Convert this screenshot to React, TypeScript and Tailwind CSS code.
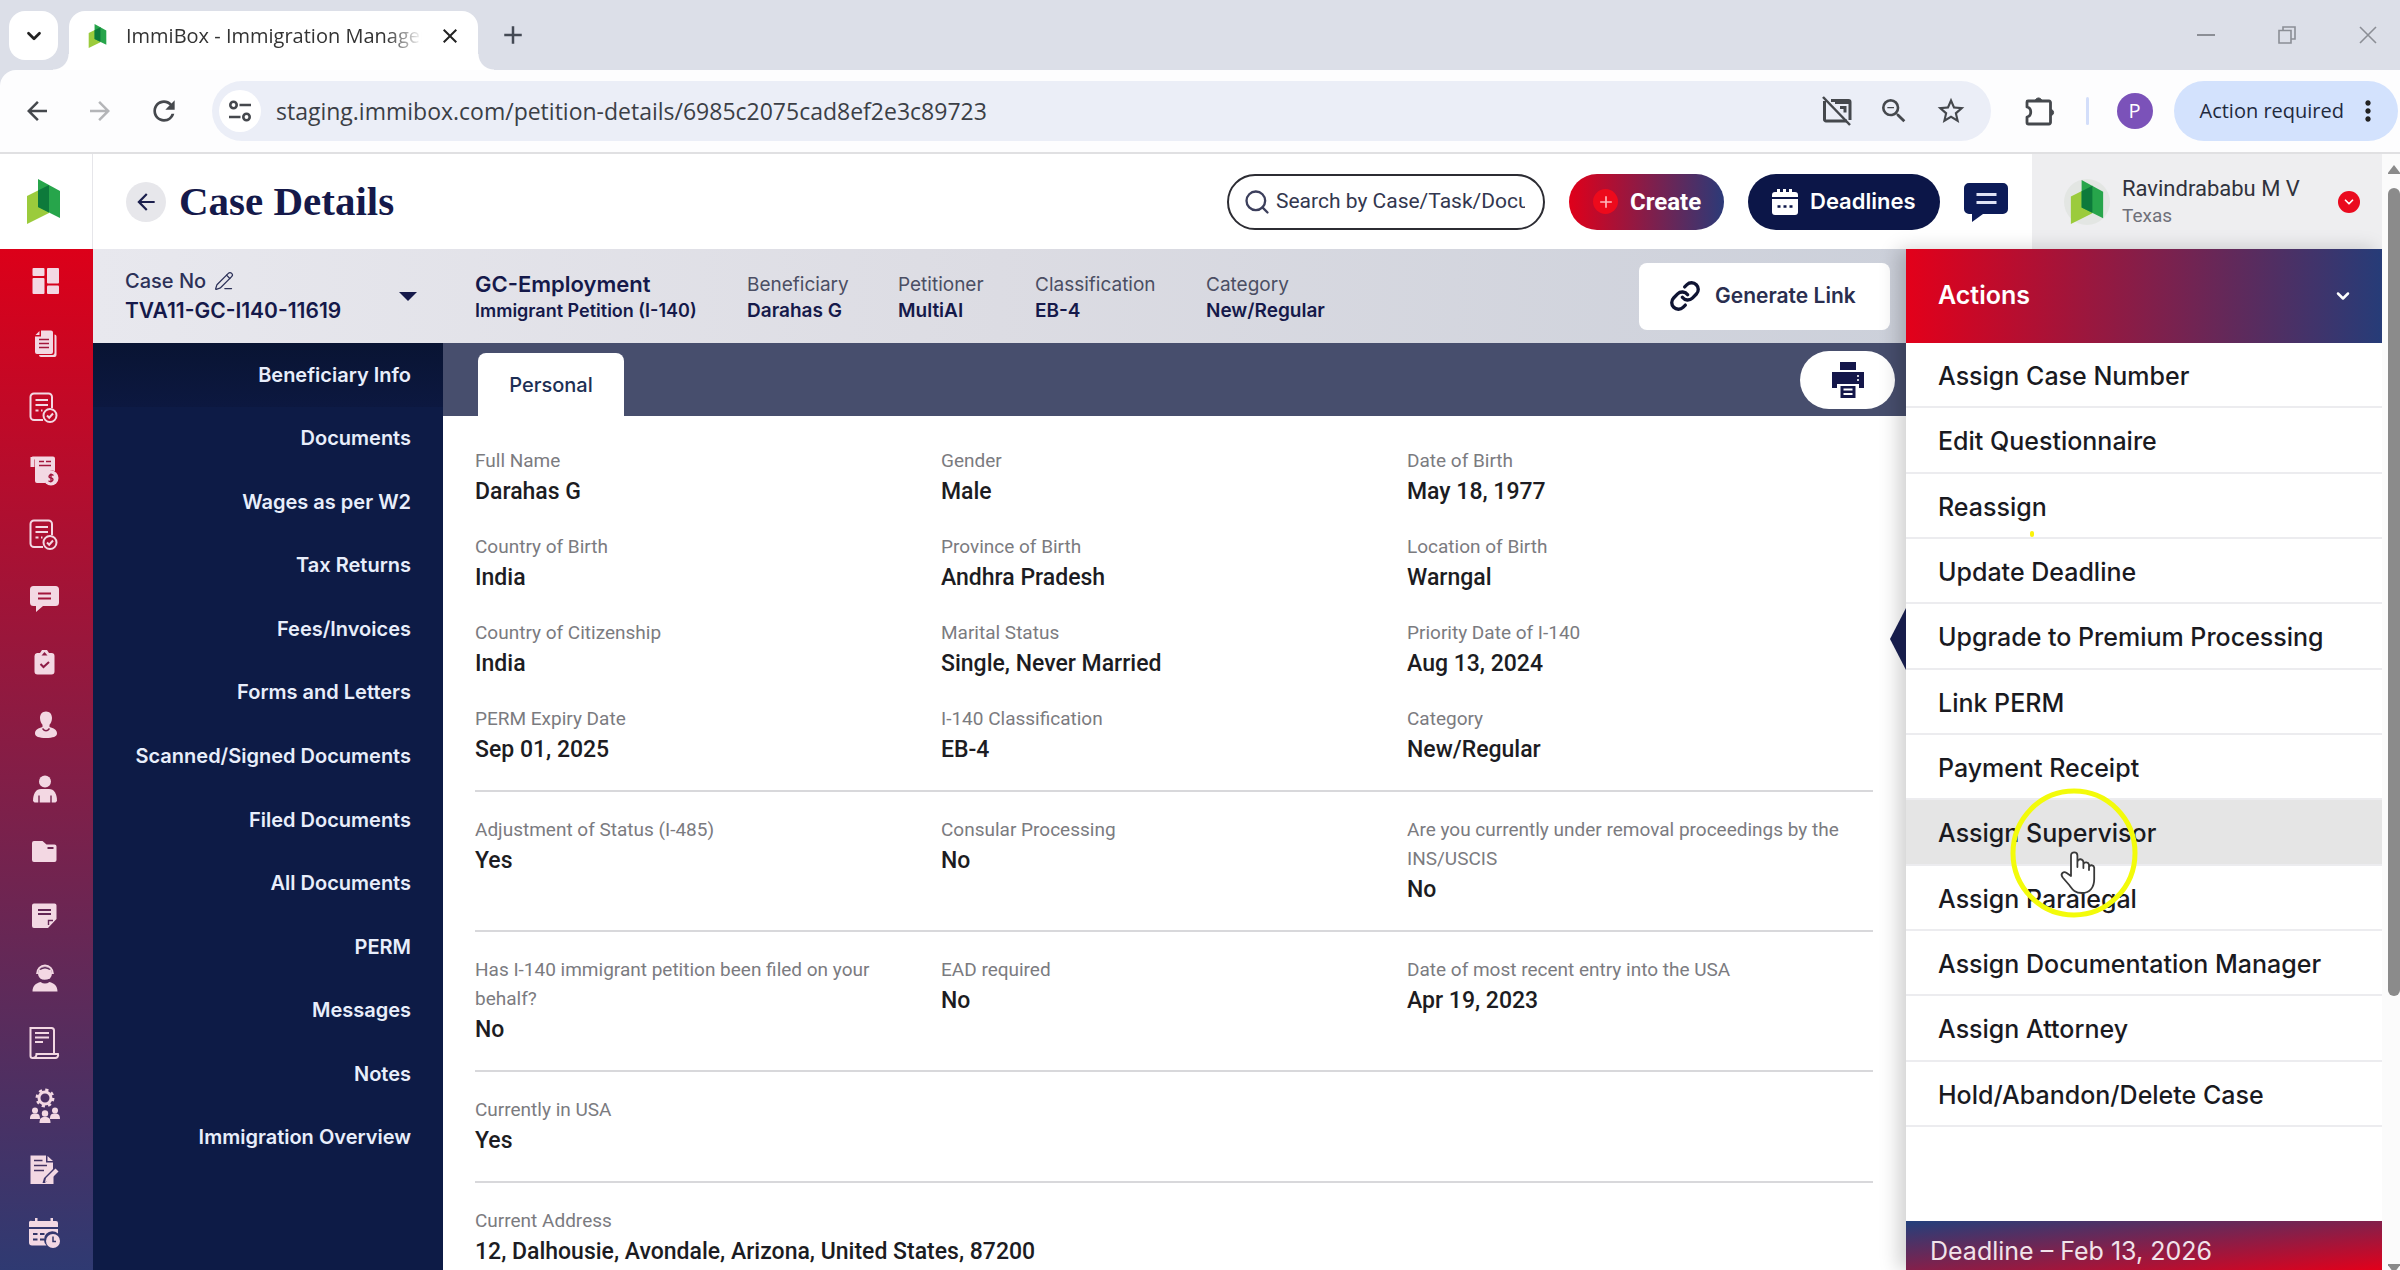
import React from "react";
import {
  MdArrowBack,
  MdArrowForward,
  MdRefresh,
  MdStarBorder,
  MdZoomOut,
  MdMoreVert,
  MdClose,
  MdAdd,
} from "react-icons/md";
import { ChevronDown, Link as LinkIcon, PencilLine, Search } from "lucide-react";

const CUT = "#a3163c";

function Logo({ className }: { className: string }) {
  return (
    <svg viewBox="0 0 33 45" className={className} aria-hidden="true">
      <path d="M0 17 22 6v28L0 45Z" fill="#9bcb3c" />
      <path d="M11 0l22 12v27L11 28Z" fill="#27a54b" />
      <path d="M11 11.5 22 6v27.5L11 28Z" fill="#0d7a3b" />
    </svg>
  );
}

function ChatIcon({ className, line }: { className: string; line: string }) {
  return (
    <svg viewBox="0 0 44 40" className={className} aria-hidden="true">
      <path
        d="M5 1h34a5 5 0 0 1 5 5v21a5 5 0 0 1-5 5H19l-11 8v-8H5a5 5 0 0 1-5-5V6a5 5 0 0 1 5-5Z"
        fill="currentColor"
      />
      <path d="M12.5 12.5h20M12.5 20.5h20" stroke={line} strokeWidth="3" />
    </svg>
  );
}

function DocCheck() {
  return (
    <g fill="none" stroke="currentColor" strokeWidth="2">
      <path d="M14 28H5a3.5 3.5 0 0 1-3.5-3.5V5A3.5 3.5 0 0 1 5 1.5h14.5A3.5 3.5 0 0 1 23 5v11" />
      <path d="M6.5 8H19M6.5 13H19M6.5 18.5h3M12 18.5h1.5" />
      <circle cx="21" cy="23.5" r="6.5" />
      <path d="m18 23.5 2.200 2.200 3.800-4.200" />
    </g>
  );
}

const railIcons: { label: string; art: React.ReactNode }[] = [
  {
    label: "Dashboard",
    art: (
      <>
        <rect x="3.5" y="3" width="12" height="8" rx="1" />
        <rect x="3.5" y="13" width="12" height="16" rx="1" />
        <rect x="18" y="3" width="12" height="15.5" rx="1" />
        <rect x="18" y="20.5" width="12" height="8.5" rx="1" />
      </>
    ),
  },
  {
    label: "Petitions",
    art: (
      <>
        <path d="M12 2.5h10a2 2 0 0 1 2 2V24a2 2 0 0 1-2 2H8a2 2 0 0 1-2-2V8.5h6Z" />
        <path d="M10.5 3 6.5 7h4Z" />
        <path d="M25.5 6.5a2 2 0 0 1 2 2V27a2 2 0 0 1-2 2H12a2 2 0 0 1-2-2h13.5a2 2 0 0 0 2-2Z" />
        <path d="M10 11.5h10M10 15.5h10M10 19.5h10" stroke={CUT} strokeWidth="1.5" />
      </>
    ),
  },
  { label: "Approvals", art: <DocCheck /> },
  {
    label: "Invoices",
    art: (
      <>
        <path d="M1.5 2h4v10h-4Z" />
        <path d="M3 1.5h21a2 2 0 0 1 2 2V16a8 8 0 0 0-9 12H8a2 2 0 0 1-2-2V5Z" />
        <path d="M10 6.5h5M17 6.5h5M10 10.5h12" stroke={CUT} strokeWidth="1.5" />
        <circle cx="22" cy="23" r="7.5" />
        <path
          d="M24.5 20.5q-2.5-1.8-4 0t1.5 2.5 1.5 2.7-4 0M22 18.5v9"
          fill="none"
          stroke={CUT}
          strokeWidth="1.4"
        />
      </>
    ),
  },
  { label: "Reviews", art: <DocCheck /> },
  {
    label: "Messages",
    art: (
      <>
        <path d="M4 4h22.5A3.5 3.5 0 0 1 30 7.5v13a3.5 3.5 0 0 1-3.5 3.5H14l-7 6v-6H4.5A3.5 3.5 0 0 1 1 20.5v-13A3.5 3.5 0 0 1 4.5 4Z" />
        <path d="M9 11.5h13M9 16.5h13" stroke={CUT} strokeWidth="1.8" />
      </>
    ),
  },
  {
    label: "Tasks",
    art: (
      <>
        <path d="M8 7h3l2-3h5l2 3h2.5A3 3 0 0 1 25.5 10v15.5a3 3 0 0 1-3 3h-14a3 3 0 0 1-3-3V10A3 3 0 0 1 8 7Z" />
        <path d="M12.5 9.5h6L15.5 6Z" fill="#8d1c46" />
        <path d="m11.5 18 3 3 5.5-5" fill="none" stroke="#8d1c46" strokeWidth="2" />
      </>
    ),
  },
  {
    label: "Clients",
    art: (
      <>
        <path d="M17 2.5c3.800 0 6 2.800 6 6.500 0 3.500-1.500 5.500-2.500 6.800V18c4 1.200 7.500 2.500 7.500 6.500 0 3-4 4.500-11 4.500S6 27.500 6 24.500c0-4 3.500-5.300 7.500-6.500v-2.200C12.500 14.500 11 12.500 11 9c0-3.700 2.200-6.500 6-6.500Z" />
        <path d="M13.5 19.5q3.5 4.5 7 0" fill="none" stroke="#80204a" strokeWidth="1.4" />
      </>
    ),
  },
  {
    label: "Beneficiaries",
    art: (
      <>
        <circle cx="16" cy="8.5" r="6" />
        <path d="M12 16h8c5 0 8 4.5 8 12l-1.5 1.5h-21L4 28c0-7.5 3-12 8-12Z" />
        <path d="M10 22.5V30M22 22.5V30" stroke="#76224e" strokeWidth="1.4" />
      </>
    ),
  },
  {
    label: "Folders",
    art: (
      <>
        <path d="M5 5h8.5l4 3.5H25.5a2 2 0 0 1 2 2V24a2 2 0 0 1-2 2H5a2 2 0 0 1-2-2V7a2 2 0 0 1 2-2Z" />
        <path d="M18.5 12h6" stroke="#6b2551" strokeWidth="2" />
      </>
    ),
  },
  {
    label: "Notes",
    art: (
      <>
        <path d="M5 3.5h20.5a2 2 0 0 1 2 2V19L19 28H5a2 2 0 0 1-2-2V5.5a2 2 0 0 1 2-2Z" />
        <path d="M9 10h13M9 14h13" stroke="#632655" strokeWidth="1.8" />
        <path d="M19.5 25v-4.5H24" fill="none" stroke="#632655" strokeWidth="1.4" />
      </>
    ),
  },
  {
    label: "Support",
    art: (
      <>
        <circle cx="16" cy="10.5" r="7" />
        <path d="M8 11a8 8.5 0 0 1 16 0" fill="none" stroke="currentColor" strokeWidth="1.8" />
        <path d="M3.5 28.5c0-5.5 3.5-8.5 8-9.5q4.5 3 9 0c4.5 1 8 4 8 9.5Z" />
        <path d="M11 6.5q5-3.5 10 0M10 15.5q4 3.5 11 1" fill="none" stroke="#5a2958" strokeWidth="1.4" />
      </>
    ),
  },
  {
    label: "Audit log",
    art: (
      <g fill="none" stroke="currentColor" strokeWidth="2">
        <path d="M25 26V3.5A2.5 2.5 0 0 0 22.5 1h-21v28a2 2 0 0 0 2 2H26a3 3 0 0 0 3-4H7.5c0 3-1.5 4-4 4" />
        <path d="M6 6h14M6 10.5h14M6 15h8" />
      </g>
    ),
  },
  {
    label: "Teams",
    art: (
      <>
        <circle cx="16" cy="8" r="6" fill="none" stroke="currentColor" strokeWidth="3" />
        <circle cx="16" cy="8" r="8.2" fill="none" stroke="currentColor" strokeWidth="2.5" strokeDasharray="3.200 3.240" />
        <circle cx="6" cy="20.5" r="3" />
        <circle cx="26" cy="20.5" r="3" />
        <path d="M1 29c0-4 1.5-5.5 5-5.5s5 1 5 5.5ZM21 29c0-4.5 1.5-5.5 5-5.5s5 1.5 5 5.5Z" />
        <circle cx="16" cy="23.5" r="3.2" />
        <path d="M10.5 33c0-4.5 1.5-6 5.500-6s5.500 1.500 5.500 6Z" />
      </>
    ),
  },
  {
    label: "Forms",
    art: (
      <>
        <path d="M1.5 1.5H17v7h7V15l-9 9-1.5 5H24v1H1.5Z" />
        <path d="M18.5 2v5H24Z" />
        <path d="m26.5 14.5 3 3-9.5 9.5-4 1 1-4Z" />
        <path d="M24.5 22v8h-10Z" />
        <path d="M5 6.5h8.5M5 11.5h13M5 16.5h10" stroke="#433161" strokeWidth="1.5" />
      </>
    ),
  },
  {
    label: "Calendar",
    art: (
      <>
        <path d="M3 4h3V1h2.5v3h13V1H24v3h3a2 2 0 0 1 2 2v4H0V6a2 2 0 0 1 3-2Z" />
        <path d="M0 12h29v4.5a8 8 0 0 0-11.5 12H3a3 3 0 0 1-3-3Z" />
        <path d="M4 17h4.5M11 17h4.5M4 22.5h4.5M11 22.5h4" stroke="#343769" strokeWidth="2.2" />
        <circle cx="24" cy="24" r="7" />
        <path d="M24 19.5v5h3" fill="none" stroke="#343769" strokeWidth="1.5" />
      </>
    ),
  },
];

const navItems = [
  "Beneficiary Info",
  "Documents",
  "Wages as per W2",
  "Tax Returns",
  "Fees/Invoices",
  "Forms and Letters",
  "Scanned/Signed Documents",
  "Filed Documents",
  "All Documents",
  "PERM",
  "Messages",
  "Notes",
  "Immigration Overview",
];

const actionItems = [
  "Assign Case Number",
  "Edit Questionnaire",
  "Reassign",
  "Update Deadline",
  "Upgrade to Premium Processing",
  "Link PERM",
  "Payment Receipt",
  "Assign Supervisor",
  "Assign Paralegal",
  "Assign Documentation Manager",
  "Assign Attorney",
  "Hold/Abandon/Delete Case",
];

const sections: [string, string][][] = [
  [
    ["Full Name", "Darahas G"],
    ["Gender", "Male"],
    ["Date of Birth", "May 18, 1977"],
    ["Country of Birth", "India"],
    ["Province of Birth", "Andhra Pradesh"],
    ["Location of Birth", "Warngal"],
    ["Country of Citizenship", "India"],
    ["Marital Status", "Single, Never Married"],
    ["Priority Date of I-140", "Aug 13, 2024"],
    ["PERM Expiry Date", "Sep 01, 2025"],
    ["I-140 Classification", "EB-4"],
    ["Category", "New/Regular"],
  ],
  [
    ["Adjustment of Status (I-485)", "Yes"],
    ["Consular Processing", "No"],
    ["Are you currently under removal proceedings by the INS/USCIS", "No"],
  ],
  [
    ["Has I-140 immigrant petition been filed on your behalf?", "No"],
    ["EAD required", "No"],
    ["Date of most recent entry into the USA", "Apr 19, 2023"],
  ],
  [["Currently in USA", "Yes"]],
];

const summary: [string, string, string][] = [
  ["Beneficiary", "Darahas G", "w-[151px]"],
  ["Petitioner", "MultiAI", "w-[137px]"],
  ["Classification", "EB-4", "w-[171px]"],
  ["Category", "New/Regular", "w-[171px]"],
];

function Field({ label, value }: { label: string; value: string }) {
  return (
    <div className="pr-4">
      <dt className="text-[19px] leading-[29px] text-[#7b7b7f]">{label}</dt>
      <dd className="text-[23px] leading-[33px] font-medium text-[#1c1c22]">{value}</dd>
    </div>
  );
}

function BrowserChrome() {
  return (
    <div className="shrink-0 bg-[#dcdfe8] font-['Open_Sans',sans-serif]">
      <div className="flex h-[70px] items-end pl-[9px]">
        <button aria-label="Search tabs" className="mb-[10px] flex size-[49px] items-center justify-center rounded-2xl bg-white text-[#222]">
          <ChevronDown size={22} strokeWidth={3} />
        </button>
        <div className="relative ml-[11px] flex h-[59px] w-[409px] items-center rounded-t-2xl bg-white pr-4 pb-[9px] pl-[17px]">
          <span className="absolute bottom-0 -left-4 size-4 bg-[radial-gradient(circle_at_0_0,transparent_15px,#fff_16px)]" />
          <span className="absolute -right-4 bottom-0 size-4 bg-[radial-gradient(circle_at_100%_0,transparent_15px,#fff_16px)]" />
          <Logo className="h-6 w-[23px]" />
          <span className="ml-[17px] w-[296px] overflow-hidden text-xl whitespace-nowrap text-[#333] [mask-image:linear-gradient(to_right,#000_88%,transparent)]">
            ImmiBox - Immigration Management
          </span>
          <button aria-label="Close tab" className="ml-[16px] text-[#222]">
            <MdClose size={24} />
          </button>
        </div>
        <button aria-label="New tab" className="mb-5 ml-5 text-[#444a54]">
          <MdAdd size={30} />
        </button>
        <div className="mb-[25px] ml-auto flex items-center gap-[61px] pr-[22px] text-[#8b8e95]">
          <button aria-label="Minimize">
            <svg width="20" height="20" viewBox="0 0 20 20"><path d="M1 10h18" stroke="currentColor" strokeWidth="2" /></svg>
          </button>
          <button aria-label="Restore">
            <svg width="20" height="20" viewBox="0 0 20 20" fill="none" stroke="currentColor" strokeWidth="1.6">
              <path d="M2 5.5h12V18H2ZM6 5V2h12v12h-3.5" />
            </svg>
          </button>
          <button aria-label="Close window">
            <svg width="20" height="20" viewBox="0 0 20 20"><path d="m2 2 16 16M18 2 2 18" stroke="currentColor" strokeWidth="1.6" /></svg>
          </button>
        </div>
      </div>

      <div className="flex h-[84px] items-center rounded-tl-2xl border-b-2 border-[#e0e0e2] bg-[#fdfdfe] pl-[22px] text-[#45484d]">
        <button aria-label="Back"><MdArrowBack size={30} /></button>
        <button aria-label="Forward" className="ml-[33px] text-[#b4b5b8]"><MdArrowForward size={30} /></button>
        <button aria-label="Reload" className="ml-[33px]"><MdRefresh size={32} /></button>
        <div className="ml-[32px] flex h-[60px] flex-1 items-center rounded-full bg-[#ebeef7] pr-[24px] pl-[7px]">
          <button aria-label="Site information" className="flex size-[42px] shrink-0 items-center justify-center rounded-full bg-white">
            <svg width="24" height="24" viewBox="0 0 24 24" fill="none" stroke="currentColor" strokeWidth="2.6">
              <circle cx="5.5" cy="6" r="3.2" />
              <circle cx="18.5" cy="18" r="3.2" />
              <path d="M11.5 6H23M1 18h11.5" />
            </svg>
          </button>
          <input
            aria-label="Address"
            readOnly
            defaultValue="staging.immibox.com/petition-details/6985c2075cad8ef2e3c89723"
            className="ml-[15px] flex-1 bg-transparent text-[23px] text-[#3b3f46] outline-none"
          />
          <div className="flex items-center gap-[25px]">
            <button aria-label="Pop-ups blocked">
              <svg width="32" height="30" viewBox="0 0 32 30" fill="none" stroke="currentColor" strokeWidth="3">
                <path d="M10 4.5h17.5A1.5 1.5 0 0 1 29 6v18M3.5 5v18.5A1.5 1.5 0 0 0 5 25h21" />
                <path d="M14 6.5h14M19 11.5h5v5" />
                <path d="m2 1 27 28" strokeWidth="2.5" />
              </svg>
            </button>
            <button aria-label="Zoom"><MdZoomOut size={32} /></button>
            <button aria-label="Bookmark this tab"><MdStarBorder size={32} /></button>
          </div>
        </div>
        <button aria-label="Extensions" className="ml-[33px]">
          <svg width="32" height="32" viewBox="0 0 32 32" fill="none" stroke="currentColor" strokeWidth="2.8" strokeLinejoin="round">
            <path d="M4 6h21a1.5 1.5 0 0 1 1.5 1.5v20A1.5 1.5 0 0 1 25 29H4.5A1.5 1.5 0 0 1 3 27.5V22c5-1 5-9 0-10V7a1 1 0 0 1 1-1Z" />
            <path d="M11.5 5a3.200 3.200 0 0 1 6 0ZM27.5 14.5a3.200 3.200 0 0 1 0 6Z" fill="currentColor" strokeWidth="1" />
          </svg>
        </button>
        <span className="ml-[30px] h-7 w-[3px] rounded bg-[#d3defa]" />
        <span className="ml-[28px] flex size-9 items-center justify-center rounded-full bg-[#7b52b9] text-xl text-white">P</span>
        <button className="mr-[2px] ml-[21px] flex h-[60px] items-center rounded-full bg-[#d3e2fd] pr-[14px] pl-[26px] text-xl text-[#1f2a3d]">
          Action required
          <MdMoreVert size={32} className="ml-2 text-[#222]" />
        </button>
      </div>
    </div>
  );
}

function AppHeader() {
  return (
    <header className="flex h-[95px] shrink-0 items-center bg-white">
      <a href="#home" aria-label="ImmiBox home" className="flex h-full w-[93px] items-center justify-center border-r border-[#e6e6ea] pr-[6px]">
        <Logo className="h-[45px] w-[33px]" />
      </a>
      <button aria-label="Go back" className="ml-[33px] flex size-10 items-center justify-center rounded-full bg-[#e7e7eb] text-[#1b1f4d]">
        <MdArrowBack size={26} />
      </button>
      <h1 className="ml-[13px] font-['Liberation_Serif',serif] text-[41px] leading-none font-bold text-[#15194a]">Case Details</h1>
      <div className="ml-auto flex h-full items-center gap-6">
        <label className="flex h-14 w-[318px] items-center rounded-full border-2 border-[#2c2c33] pr-[18px] pl-[14px]">
          <Search size={28} strokeWidth={2} className="shrink-0 text-[#3c3f5c]" />
          <input
            aria-label="Search"
            placeholder="Search by Case/Task/Document"
            className="ml-[5px] w-full min-w-0 bg-transparent font-['Roboto',sans-serif] text-[21px] outline-none placeholder:text-[#33374f]"
          />
        </label>
        <button className="flex h-14 w-[155px] items-center rounded-full bg-linear-to-r/srgb from-[#e0001a] to-[#2b3a78] pl-6 font-['Roboto',sans-serif] text-[24px] font-bold text-white">
          <span className="mr-3 flex size-[25px] items-center justify-center rounded-full bg-[#ed0a1c] text-[#ffb8bc]">
            <MdAdd size={20} />
          </span>
          Create
        </button>
        <button className="flex h-14 w-48 items-center rounded-full bg-[#0c1648] pl-6 text-[22px] font-semibold text-white">
          <svg width="26" height="26" viewBox="0 0 26 26" fill="currentColor" className="mr-[12px]">
            <path d="M3 3h2V0h3v3h3V0h3v3h3V0h3v3h3a3 3 0 0 1 3 3v2H0V6a3 3 0 0 1 3-3Z" />
            <path d="M0 10h26v13a3 3 0 0 1-3 3H3a3 3 0 0 1-3-3Z" />
            <path d="M5.5 17.5h3M11.5 17.5h3M17.5 17.5h3" stroke="#0c1648" strokeWidth="2.5" />
          </svg>
          Deadlines
        </button>
        <button aria-label="Messages" className="text-[#0c1b58]">
          <ChatIcon className="h-10 w-11" line="#dfe3f5" />
        </button>
        <button className="flex h-full w-[350px] items-center bg-[#eeeef0] pr-[22px] pl-8 text-left font-['Roboto',sans-serif]">
          <span className="flex size-[46px] items-center justify-center rounded-full bg-[#e3e6e3]">
            <Logo className="h-11 w-9" />
          </span>
          <span className="ml-3">
            <span className="block text-[22px] leading-7 text-[#30323c]">Ravindrababu M V</span>
            <span className="block text-[19px] leading-[25px] text-[#6f7079]">Texas</span>
          </span>
          <span className="ml-auto flex size-[22px] items-center justify-center rounded-full bg-[#ea0a1e] text-white">
            <ChevronDown size={14} strokeWidth={3} />
          </span>
        </button>
      </div>
    </header>
  );
}

function CaseBar() {
  return (
    <div className="flex h-[94px] shrink-0 items-center bg-linear-to-r/srgb from-[#e8e8ee] via-[#dcdce3] to-[#ccd0da] text-[#15194a]">
      <div className="flex w-[350px] items-center pr-[26px] pl-8">
        <div>
          <div className="flex items-center gap-2 text-xl leading-[30px] font-medium text-[#2c3158]">
            Case No
            <button aria-label="Edit case number"><PencilLine size={20} strokeWidth={1.5} /></button>
          </div>
          <div className="text-[21px] leading-[30px] font-semibold">TVA11-GC-I140-11619</div>
        </div>
        <button aria-label="Switch case" className="ml-auto">
          <svg width="18" height="9" viewBox="0 0 18 9"><path d="M0 0h18L9 9Z" fill="currentColor" /></svg>
        </button>
      </div>
      <div className="flex flex-1 items-center pt-[2px] pl-8">
        <div className="w-[272px]">
          <div className="text-[22px] leading-[28px] font-semibold">GC-Employment</div>
          <div className="text-[18px] leading-[26px] font-semibold">Immigrant Petition (I-140)</div>
        </div>
        {summary.map(([label, value, width]) => (
          <div key={label} className={width}>
            <div className="text-[19px] leading-[27px] text-[#4b4e63]">{label}</div>
            <div className="text-[19px] leading-[25px] font-semibold">{value}</div>
          </div>
        ))}
      </div>
      <button className="mr-4 flex h-[67px] w-[251px] items-center rounded-lg bg-white pl-[30px] text-[21px] font-semibold text-[#2a2e4f]">
        <LinkIcon size={32} strokeWidth={2.5} className="mr-[14px] text-[#0f1433]" />
        Generate Link
      </button>
    </div>
  );
}

function Actions() {
  return (
    <aside className="relative flex w-[476px] shrink-0 flex-col bg-white shadow-[-8px_0_18px_rgba(0,0,0,0.18)]">
      <svg width="16" height="62" viewBox="0 0 16 62" className="absolute top-[359px] -left-4" aria-hidden="true">
        <path d="M16 0v62L0 31Z" fill="#171d4b" />
      </svg>
      <button className="flex h-[94px] shrink-0 items-center justify-between bg-linear-to-r/srgb from-[#e3001a] to-[#263c78] pr-[29px] pl-8 text-[25px] font-semibold text-white">
        Actions
        <ChevronDown size={20} strokeWidth={3} />
      </button>
      <ul className="grid h-[784px] shrink-0 grid-rows-12">
        {actionItems.map((item) => (
          <li key={item} className="relative flex border-b-2 border-[#ececef]">
            <button
              className={
                item === "Assign Supervisor"
                  ? "w-full bg-[#e5e5e5] px-8 pt-1 text-left text-[25px] font-medium text-[#1a1a1f]"
                  : "w-full px-8 pt-1 text-left text-[25px] font-medium text-[#1a1a1f]"
              }
            >
              {item}
            </button>
            {item === "Reassign" && <span className="absolute bottom-0 left-[124px] h-[6px] w-1 rounded-full bg-[#fbf30a]" />}
            {item === "Assign Supervisor" && <Pointer />}
          </li>
        ))}
      </ul>
      <div className="mt-[94px] flex-1 bg-linear-to-br/srgb from-[#22407c] to-[#e3001a] px-6 pt-[12px] text-[25px] leading-9 text-[#f1e3ea]">
        Deadline – Feb 13, 2026
      </div>
    </aside>
  );
}

function Pointer() {
  return (
    <svg width="130" height="130" viewBox="0 0 130 130" fill="none" className="pointer-events-none absolute -top-[12px] left-[103px] z-10" aria-hidden="true">
      <ellipse cx="65" cy="65" rx="61" ry="62" stroke="#f3fb0a" strokeWidth="5" />
      <path
        d="M62 88V67.5a3.200 3.200 0 0 1 6.400 0V79v-5a3 3 0 0 1 6 .5V80v-4a3 3 0 0 1 5.600.5V82v-3a2.700 2.700 0 0 1 5.200.5V91c0 8-4 14-12 14s-10-4-13-8l-6.500-7.500c-3-4 1-6.500 4-4.500Z"
        fill="#fff"
        stroke="#3a3a3a"
        strokeWidth="1.8"
        strokeLinejoin="round"
      />
    </svg>
  );
}

export default function App() {
  return (
    <div className="flex h-screen flex-col overflow-hidden bg-white font-['Inter',sans-serif]">
      <BrowserChrome />
      <div className="flex min-h-0 flex-1">
        <div className="flex min-w-0 flex-1 flex-col overflow-hidden">
          <AppHeader />
          <div className="flex min-h-0 flex-1">
            <nav aria-label="Main" className="w-[93px] shrink-0 bg-linear-to-b/srgb from-[#dc0019] to-[#2f3a72] text-[#f3d8e3]">
              <ul className="grid h-[1016px] grid-rows-16">
                {railIcons.map(({ label, art }) => (
                  <li key={label} className="flex">
                    <a href="#section" aria-label={label} className="flex flex-1 items-center justify-center pr-[3px]">
                      <svg width="32" height="32" viewBox="0 0 32 32" fill="currentColor" className="overflow-visible">
                        {art}
                      </svg>
                    </a>
                  </li>
                ))}
              </ul>
            </nav>
            <div className="flex min-w-0 flex-1 flex-col">
              <CaseBar />
              <div className="flex min-h-0 flex-1">
                <nav aria-label="Case sections" className="w-[350px] shrink-0 bg-[#0d1b46]">
                  <ul className="grid h-[826px] grid-rows-13 text-right text-xl font-semibold text-[#e8eefb]">
                    {navItems.map((item, i) => (
                      <li key={item} className="flex">
                        <a
                          href="#case"
                          aria-current={i === 0 ? "page" : undefined}
                          className={
                            i === 0
                              ? "flex flex-1 items-center justify-end bg-linear-to-b/srgb from-[#091433] to-[#0c1840] pr-8"
                              : "flex flex-1 items-center justify-end pr-8"
                          }
                        >
                          {item}
                        </a>
                      </li>
                    ))}
                  </ul>
                </nav>
                <main className="flex min-w-0 flex-1 flex-col">
                  <div className="flex h-[73px] shrink-0 items-end justify-between bg-[#474e6d] pr-[11px] pl-[35px]">
                    <button className="h-[63px] w-[146px] rounded-t-lg bg-white text-xl font-medium text-[#1d2f55]">Personal</button>
                    <button aria-label="Print" className="mb-[7px] flex h-[58px] w-[95px] items-center justify-center rounded-full bg-white text-[#14174a]">
                      <svg width="32" height="36" viewBox="0 0 32 36" fill="currentColor">
                        <path d="M8 0h16v8H8Z" />
                        <path d="M0 10h32v16h-5v-4H5v4H0Z" />
                        <path d="M8.5 24h15v12h-15Z" />
                        <path d="M11.5 27.5h9M11.5 32h9" stroke="#fff" strokeWidth="1.8" />
                        <path d="M26 13v2M26 17v2" stroke="#fff" strokeWidth="1.6" />
                      </svg>
                    </button>
                  </div>
                  <div className="pt-[7px] pr-[33px] pl-8 font-['Roboto',sans-serif]">
                    {sections.map((fields) => (
                      <dl key={fields[0][0]} className="grid grid-cols-3 gap-y-6 border-b-2 border-[#d8d8db] pt-[23px] pb-6">
                        {fields.map(([label, value]) => (
                          <Field key={label} label={label} value={value} />
                        ))}
                      </dl>
                    ))}
                    <dl className="pt-[23px]">
                      <Field label="Current Address" value="12, Dalhousie, Avondale, Arizona, United States, 87200" />
                    </dl>
                  </div>
                </main>
              </div>
            </div>
            <Actions />
          </div>
        </div>
        <div className="flex w-[18px] shrink-0 flex-col items-end bg-[#fbfbfb] pt-[11px]" aria-hidden="true">
          <svg width="12" height="9" viewBox="0 0 12 9"><path d="M6 0l7 9H-1Z" fill="#8a8a8a" /></svg>
          <span className="mt-[14px] h-[808px] w-3 rounded-full bg-[#8b8b8b]" />
          <svg width="12" height="9" viewBox="0 0 12 9" className="mt-auto mb-[-3px]"><path d="M6 9l7-9H-1Z" fill="#8a8a8a" /></svg>
        </div>
      </div>
    </div>
  );
}
